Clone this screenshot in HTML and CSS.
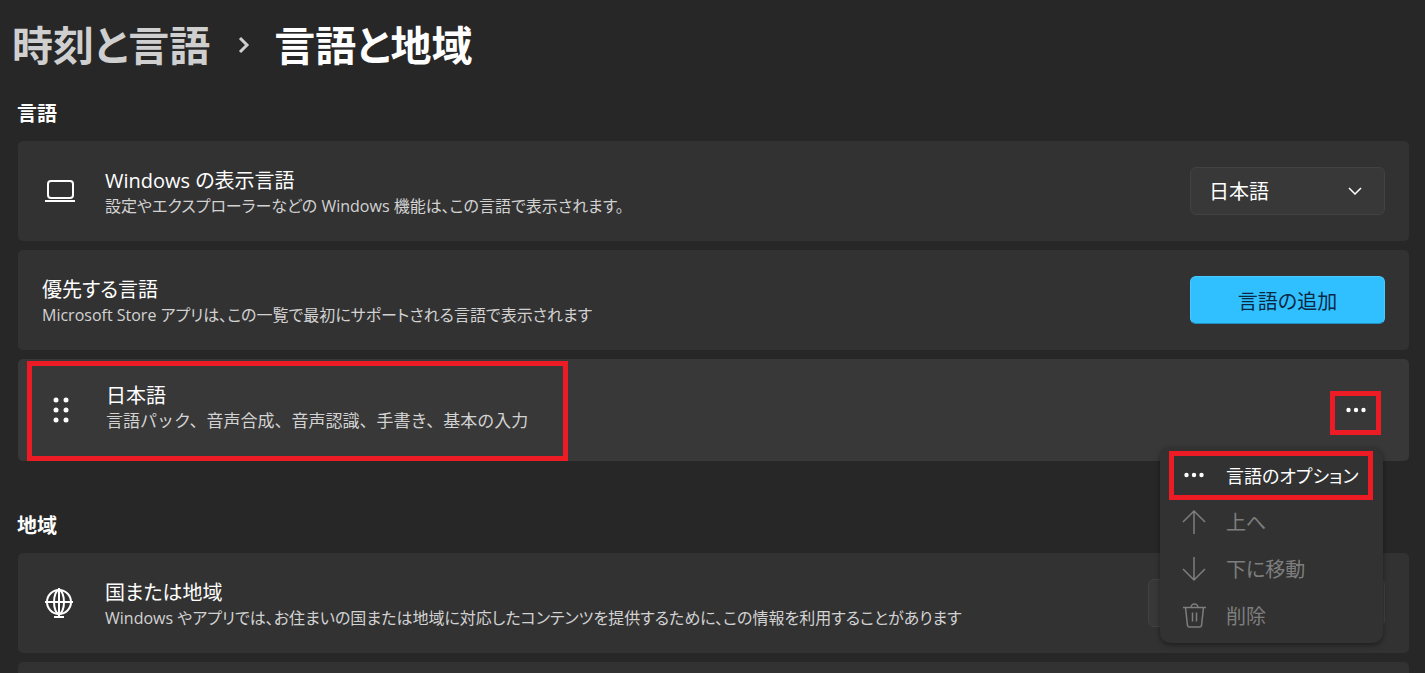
FILE: index.html
```html
<!DOCTYPE html>
<html lang="ja">
<head>
    <meta charset="UTF-8">
    <meta name="viewport" content="width=device-width, initial-scale=1.0">
    <title>言語と地域</title>
    <link rel="stylesheet" href="styles.css">
</head>
<body>
    <main class="settings">
        <header class="breadcrumb">
            <a href="#" class="breadcrumb-parent">時刻と言語</a>
            <svg class="breadcrumb-arrow" width="12" height="18" viewBox="0 0 12 18"><path d="M2 2l7 7-7 7"/></svg>
            <h1>言語と地域</h1>
        </header>

        <section class="group">
            <h2>言語</h2>

            <div class="card">
                <div class="card-icon">
                    <svg width="32" height="24" viewBox="0 0 32 24">
                        <rect x="4" y="2" width="25" height="17" rx="3"/>
                        <path d="M1 22h30"/>
                    </svg>
                </div>
                <div class="card-text">
                    <label class="card-title" for="displayLanguage">Windows の表示言語</label>
                    <div class="card-desc">設定やエクスプローラーなどの Windows 機能は、この言語で表示されます。</div>
                </div>
                <div class="select-wrap">
                    <select id="displayLanguage">
                        <option>日本語</option>
                    </select>
                    <svg class="select-arrow" width="14" height="8" viewBox="0 0 14 8"><path d="M1 1l6 6 6-6"/></svg>
                </div>
            </div>

            <div class="card">
                <div class="card-text">
                    <div class="card-title">優先する言語</div>
                    <div class="card-desc">Microsoft Store アプリは、この一覧で最初にサポートされる言語で表示されます</div>
                </div>
                <button class="add-btn">言語の追加</button>
            </div>

            <div class="card language-row">
                <div class="language-item marked">
                    <div class="card-icon">
                        <svg class="dots" width="20" height="28" viewBox="0 0 20 28">
                            <circle cx="5" cy="4" r="2.5"/><circle cx="15" cy="4" r="2.5"/>
                            <circle cx="5" cy="14" r="2.5"/><circle cx="15" cy="14" r="2.5"/>
                            <circle cx="5" cy="24" r="2.5"/><circle cx="15" cy="24" r="2.5"/>
                        </svg>
                    </div>
                    <div class="card-text">
                        <div class="card-title">日本語</div>
                        <div class="card-desc">言語パック、音声合成、音声認識、手書き、基本の入力</div>
                    </div>
                </div>
                <button class="more-btn marked" aria-label="その他">
                    <svg class="dots" width="24" height="6" viewBox="0 0 24 6"><circle cx="4.500" cy="3" r="2.200"/><circle cx="12" cy="3" r="2.200"/><circle cx="19.500" cy="3" r="2.200"/></svg>
                </button>

                <div class="menu">
                    <button class="menu-item marked">
                        <svg class="dots" width="24" height="24" viewBox="0 0 24 24"><circle cx="4.500" cy="12" r="2.200"/><circle cx="12" cy="12" r="2.200"/><circle cx="19.500" cy="12" r="2.200"/></svg>
                        言語のオプション
                    </button>
                    <button class="menu-item" disabled>
                        <svg width="24" height="26" viewBox="0 0 24 26"><path d="M12 25V2M1 13L12 2l11 11"/></svg>
                        上へ
                    </button>
                    <button class="menu-item" disabled>
                        <svg width="24" height="26" viewBox="0 0 24 26"><path d="M12 1v23M1 13l11 11 11-11"/></svg>
                        下に移動
                    </button>
                    <button class="menu-item" disabled>
                        <svg width="24" height="26" viewBox="0 0 24 26"><path d="M1 4.500h23M9 4.500a3.500 3.500 0 0 1 7 0M3.500 4.500l2 18a2 2 0 0 0 2 1.500h10a2 2 0 0 0 2-1.500l2-18M10.500 9.500v9M14.500 9.500v9"/></svg>
                        削除
                    </button>
                </div>
            </div>
        </section>

        <section class="group">
            <h2>地域</h2>

            <div class="card">
                <div class="card-icon">
                    <svg width="32" height="32" viewBox="0 0 32 32">
                        <circle cx="15" cy="15" r="12"/>
                        <ellipse cx="15" cy="15" rx="5" ry="12"/>
                        <path d="M1 15h28M15 1v29M10 30h10"/>
                    </svg>
                </div>
                <div class="card-text">
                    <label class="card-title" for="region">国または地域</label>
                    <div class="card-desc">Windows やアプリでは、お住まいの国または地域に対応したコンテンツを提供するために、この情報を利用することがあります</div>
                </div>
                <div class="select-wrap wide">
                    <select id="region"></select>
                </div>
            </div>

            <div class="card"></div>
        </section>
    </main>
</body>
</html>
```
FILE: styles.css
```css
* {
    box-sizing: border-box;
}

body {
    margin: 0;
    background-color: #272727;
    color: #fff;
    font-family: "Open Sans", "Noto Sans CJK JP", sans-serif;
    font-size: 20px;
    font-feature-settings: "palt";
}

button, select {
    font: inherit;
    font-feature-settings: inherit;
    color: inherit;
}

svg {
    display: block;
    flex-shrink: 0;
    fill: none;
    stroke: currentColor;
    stroke-width: 2;
}

.dots {
    fill: currentColor;
    stroke: none;
}

.settings {
    height: 100vh;
    overflow: hidden;
    padding-top: 17px;
}

.breadcrumb {
    display: flex;
    align-items: center;
    padding-left: 12px;
    margin-bottom: 27px;
    font-size: 41px;
    font-weight: 700;
    line-height: 56px;
}

.breadcrumb h1 {
    margin: 0;
    font-size: inherit;
    font-weight: inherit;
}

.breadcrumb-parent {
    color: #cfcfcf;
    text-decoration: none;
}

.breadcrumb-arrow {
    margin: 0 24px 0 28px;
    color: #cfcfcf;
    stroke-width: 3;
}

.group {
    padding: 0 16px 0 18px;
    margin-bottom: 51px;
}

.group h2 {
    margin: 0 0 13px -1px;
    font-size: 20px;
    font-weight: 700;
    line-height: 28px;
}

.card {
    display: flex;
    align-items: center;
    min-height: 100px;
    margin-bottom: 9px;
    padding: 0 24px;
    background-color: #323232;
    border-radius: 5px;
}

.card-icon {
    display: flex;
    justify-content: center;
    width: 36px;
    margin-right: 27px;
}

.card-text {
    flex: 1;
    padding-top: 4px;
}

.card-title {
    display: block;
    font-size: 20px;
    line-height: 26px;
}

.card-desc {
    color: #d2d2d2;
    font-size: 16px;
    line-height: 24px;
}

.select-wrap {
    position: relative;
    width: 195px;
}

.select-wrap.wide {
    width: 237px;
}

select {
    appearance: none;
    display: block;
    width: 100%;
    height: 48px;
    padding: 0 18px;
    background-color: #383838;
    border: 1px solid #424242;
    border-radius: 6px;
}

.select-arrow {
    position: absolute;
    right: 23px;
    top: 20px;
    stroke-width: 1.5;
    pointer-events: none;
}

.add-btn {
    width: 195px;
    height: 48px;
    background-color: #30c0ff;
    border: 1px solid #4acaff;
    border-bottom-color: #2090c4;
    border-radius: 6px;
    color: #0a2a44;
}

/* Language row and its menu */
.language-row {
    position: relative;
    min-height: 102px;
    padding: 0 28px 0 9px;
    background-color: #383838;
    justify-content: space-between;
}

.marked {
    border: 5px solid #ed1c24;
}

.language-item {
    display: flex;
    align-items: center;
    align-self: stretch;
    flex: 0 1 541px;
    margin-top: 2px;
    padding: 0 11px 2px;
}

.language-item .card-text {
    padding: 0 0 4px;
}

/* full-width punctuation here */
.language-item .card-desc {
    font-size: 17px;
    font-feature-settings: normal;
}

.more-btn {
    display: flex;
    justify-content: center;
    align-items: center;
    align-self: flex-end;
    width: 51px;
    height: 44px;
    margin-bottom: 26px;
    padding: 0 0 6px;
    background-color: transparent;
}

.menu {
    position: absolute;
    top: 88px;
    right: 26px;
    z-index: 1;
    width: 223px;
    padding: 4px 10px 4px 9px;
    background-color: #323232;
    border-radius: 10px;
    box-shadow: 0 2px 5px rgba(0, 0, 0, 0.4);
}

.menu-item {
    display: flex;
    align-items: center;
    gap: 20px;
    width: 100%;
    height: 47px;
    padding: 0 8px;
    background-color: transparent;
    border: 5px solid transparent;
    white-space: nowrap;
}

.menu-item.marked {
    height: 49px;
    margin-bottom: -2px;
    padding-bottom: 2px;
    border-color: #ed1c24;
    font-size: 18px;
}

.menu-item svg {
    stroke-width: 1.5;
}

.menu-item:disabled {
    color: #7e7e7e;
}
```
